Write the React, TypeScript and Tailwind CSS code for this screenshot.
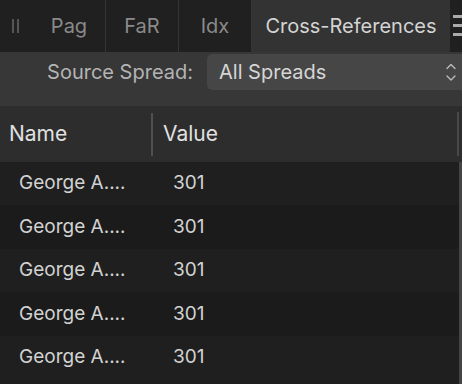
import React from "react";

const rows = Array.from({ length: 5 }, () => ({ name: "George A....", value: "301" }));

const tabs = ["Pag", "FaR", "Idx"];

const Chevrons = () => (
  <svg width="12" height="24" viewBox="0 0 12 24" fill="none" stroke="#bdbdbd" strokeWidth="1.3" strokeLinecap="round" strokeLinejoin="round">
    <path d="M2 8.5 L6 4.5 L10 8.5" />
    <path d="M2 16 L6 20 L10 16" />
  </svg>
);

export default function App() {
  return (
    <div
      className="w-[462px] h-[384px] overflow-hidden bg-[#1e1e1e] flex flex-col"
      style={{ fontFamily: "Inter, 'Liberation Sans', sans-serif" }}
    >
      {/* tab bar */}
      <div className="h-[52px] flex bg-[#202020] shrink-0">
        <div className="w-[33px] flex items-center pl-[12px] gap-[3px]">
          <div className="w-[2px] h-[14px] bg-[#555]" />
          <div className="w-[2px] h-[14px] bg-[#555]" />
        </div>
        {tabs.map((t) => (
          <div
            key={t}
            className="w-[73px] flex items-center justify-center text-[20px] text-[#8a8a8a] border-r-[1px] border-[#353535] last:border-r-0"
          >
            {t}
          </div>
        ))}
        <div className="w-[198px] bg-[#333333] flex items-center justify-center text-[20px] text-[#d4d4d4]">
          Cross-References
        </div>
        <div className="flex-1 flex flex-col justify-center gap-[6px] pl-[3px] pb-[2px]">
          <div className="h-[3px] bg-[#aaa]" />
          <div className="h-[3px] bg-[#aaa]" />
          <div className="h-[3px] bg-[#aaa]" />
        </div>
      </div>

      {/* toolbar */}
      <div className="h-[54px] bg-[#373737] flex items-start pt-[2px] shrink-0">
        <div className="w-[207px] h-[36px] flex items-center justify-end pr-[14px] text-[20px] text-[#b4b4b4]">
          Source Spread:
        </div>
        <div className="flex-1 h-[36px] bg-[#464646] rounded-l-[5px] flex items-center pl-[12px] pr-[5px]">
          <span className="flex-1 text-[20px] text-[#d6d6d6]">All Spreads</span>
          <Chevrons />
        </div>
      </div>

      {/* header */}
      <div className="h-[56px] bg-[#2d2d2d] flex items-center shrink-0">
        <div className="w-[151px] pl-[9px] text-[21px] text-[#e0e0e0]">Name</div>
        <div className="w-[2px] h-[43px] bg-[#505050]" />
        <div className="flex-1 pl-[10px] text-[21px] text-[#e0e0e0]">Value</div>
        <div className="w-[2px] h-[44px] bg-[#484848] mr-[3px]" />
      </div>

      {/* rows */}
      <div className="flex-1 flex flex-col border-r-[3px] border-[#444]">
        {rows.map((r, i) => (
          <div
            key={i}
            className={`h-[43.4px] shrink-0 flex items-center text-[19px] text-[#d2d2d2] ${
              i % 2 === 0 ? "bg-[#1f1f1f]" : "bg-[#1b1b1b]"
            }`}
          >
            <div className="w-[154px] pl-[19px]">{r.name}</div>
            <div className="pl-[19px]">{r.value}</div>
          </div>
        ))}
      </div>
    </div>
  );
}
